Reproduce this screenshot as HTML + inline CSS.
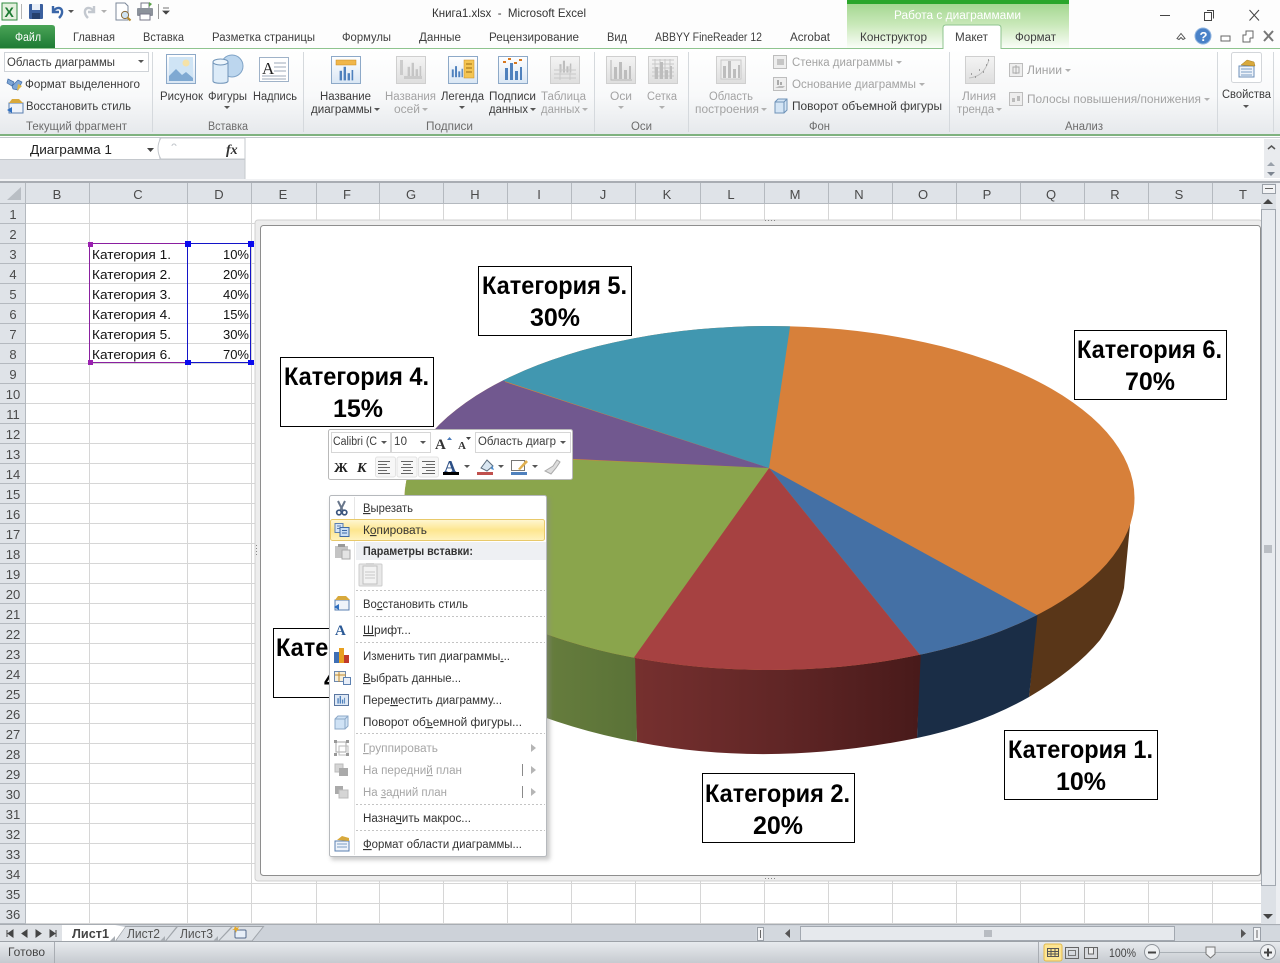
<!DOCTYPE html>
<html lang="ru"><head><meta charset="utf-8"><title>Книга1.xlsx - Microsoft Excel</title>
<style>
html,body{margin:0;padding:0;background:#fff;overflow:hidden}
svg{display:block}
text{font-family:"Liberation Sans",sans-serif;font-size:11.5px;fill:#3c3c3c}
.d{fill:#a3a3a3}
.g{fill:#6c6c6c}
.t{font-size:11.5px;fill:#3f3f3f}
.h{font-size:13px;fill:#4a4a4a;text-anchor:middle}
.r{font-size:13px;fill:#4a4a4a;text-anchor:middle}
.c{font-size:13px;fill:#111}
.v{font-size:13px;fill:#111;text-anchor:end}
.l{font-size:25px;font-weight:bold;fill:#000}
.p{font-size:25px;font-weight:bold;fill:#000;text-anchor:middle}
.m{font-size:11.5px;fill:#333}
.md{font-size:11.5px;fill:#a6a6a6}
.u{text-decoration:underline}
</style></head><body>
<svg xmlns="http://www.w3.org/2000/svg" width="1280" height="963" viewBox="0 0 1280 963">
<defs>
<linearGradient id="rib" x1="0" y1="0" x2="0" y2="1"><stop offset="0" stop-color="#fff"/><stop offset=".55" stop-color="#f8f9fa"/><stop offset="1" stop-color="#e6e9ec"/></linearGradient>
<linearGradient id="file" x1="0" y1="0" x2="0" y2="1"><stop offset="0" stop-color="#4aa457"/><stop offset="1" stop-color="#1e7b34"/></linearGradient>
<linearGradient id="ctx" x1="0" y1="0" x2="0" y2="1"><stop offset="0" stop-color="#9ed48a"/><stop offset=".5" stop-color="#c8e8b8"/><stop offset="1" stop-color="#fafdf8"/></linearGradient>
<linearGradient id="sel" x1="0" y1="0" x2="0" y2="1"><stop offset="0" stop-color="#fff7d4"/><stop offset=".5" stop-color="#fde68f"/><stop offset="1" stop-color="#fff3c0"/></linearGradient>
<linearGradient id="stat" x1="0" y1="0" x2="0" y2="1"><stop offset="0" stop-color="#e9ecef"/><stop offset="1" stop-color="#c6cad0"/></linearGradient>
<linearGradient id="ic" x1="0" y1="0" x2="0" y2="1"><stop offset="0" stop-color="#fff"/><stop offset="1" stop-color="#d9e6f4"/></linearGradient>
<linearGradient id="icd" x1="0" y1="0" x2="0" y2="1"><stop offset="0" stop-color="#f4f4f4"/><stop offset="1" stop-color="#dedede"/></linearGradient>
<linearGradient id="mar" x1="0" y1="0" x2="1" y2="0"><stop offset="0" stop-color="#76302f"/><stop offset=".5" stop-color="#612626"/><stop offset="1" stop-color="#481a1a"/></linearGradient>
<linearGradient id="grn" x1="0" y1="0" x2="1" y2="0"><stop offset="0" stop-color="#6c8240"/><stop offset="1" stop-color="#5a7237"/></linearGradient>
<pattern id="rows" patternUnits="userSpaceOnUse" x="0" y="204" width="10" height="20"><rect y="19" width="10" height="1" fill="#d6d6d6"/></pattern>
<pattern id="rowh" patternUnits="userSpaceOnUse" x="0" y="204" width="10" height="20"><rect y="19" width="10" height="1" fill="#b4b9bf"/></pattern>
<clipPath id="top"><ellipse cx="769.5" cy="498" rx="365" ry="172"/></clipPath>
<filter id="sh" x="-5%" y="-5%" width="112%" height="110%"><feGaussianBlur stdDeviation="2"/></filter>
<g id="bars"><rect x="-8" y="-4" width="3" height="12" fill="#4f81bd"/><rect x="-3" y="-9" width="3" height="17" fill="#4f81bd"/><rect x="2" y="-1" width="3" height="9" fill="#4f81bd"/><rect x="7" y="-5" width="2" height="13" fill="#4f81bd"/></g>
<g id="barsd"><rect x="-8" y="-4" width="3" height="12" fill="#bdbdbd"/><rect x="-3" y="-9" width="3" height="17" fill="#bdbdbd"/><rect x="2" y="-1" width="3" height="9" fill="#bdbdbd"/><rect x="7" y="-5" width="2" height="13" fill="#bdbdbd"/></g>
<path id="ar" d="M-3 0h6l-3 3z" fill="#555"/>
<path id="ard" d="M-3 0h6l-3 3z" fill="#b0b0b0"/>
</defs>

<!-- window background -->
<rect width="1280" height="963" fill="#fff"/>
<rect width="1280" height="48" fill="#fdfdfd"/>

<!-- contextual tab header -->
<rect x="847" y="0" width="222" height="48" fill="url(#ctx)"/>
<rect x="847" y="0" width="222" height="4" fill="#2aa62a"/>
<text x="894" y="19" textLength="127" lengthAdjust="spacingAndGlyphs" style="fill:#fff;font-size:11.5px">Работа с диаграммами</text>

<!-- QAT -->
<rect x="2" y="3" width="15" height="17" fill="#e4f0de" stroke="#2f8a3f"/><text x="4.5" y="17" style="font-size:14px;font-weight:bold;fill:#1e7b34">X</text>
<path d="M21.5 4v15" stroke="#b5b5b5"/>
<rect x="29" y="4" width="14" height="15" rx="1" fill="#3a5f9e"/><rect x="32" y="4" width="8" height="6" fill="#e8eef7"/><rect x="32" y="13" width="8" height="6" fill="#25406e"/>
<path d="M53 6v6h6M53 12c3-6 10-5 9 1-.3 2-1 3-3 5" fill="none" stroke="#3a66a8" stroke-width="2.4"/>
<use href="#ar" x="71" y="10"/>
<path d="M94 6v6h-6M94 12c-3-6-10-5-9 1 .3 2 1 3 3 5" fill="none" stroke="#c3c8cf" stroke-width="2.4"/>
<use href="#ard" x="104" y="10"/>
<path d="M116 3h9l3 3v14h-12z" fill="#fff" stroke="#7b8799"/><circle cx="125" cy="15" r="3.6" fill="#cfe3f3" stroke="#8a6b3c"/><path d="M127.500 17.500l3 3" stroke="#b4892d" stroke-width="2"/>
<rect x="141" y="3" width="8" height="6" fill="#fff" stroke="#778"/><rect x="137" y="8" width="16" height="8" rx="1" fill="#8c929b"/><rect x="140" y="14" width="10" height="6" fill="#fff" stroke="#778"/><path d="M149 2l3 2-3 3" fill="#5aa048"/>
<path d="M158.500 4v15" stroke="#999"/>
<path d="M163 8h6M163 11h6l-3 3z" fill="#444" stroke="#444" stroke-width=".8"/>

<text x="432" y="17" textLength="154" lengthAdjust="spacingAndGlyphs" style="font-size:12px;fill:#333" xml:space="preserve">Книга1.xlsx  -  Microsoft Excel</text>

<!-- window controls -->
<path d="M1160 15.500h10" stroke="#444"/>
<rect x="1204.500" y="12.500" width="7" height="8" fill="#fff" stroke="#444"/><path d="M1207 10.500h6.500v8" fill="none" stroke="#444"/>
<path d="M1249.500 10l9.500 10.500M1259 10l-9.500 10.500" stroke="#444"/>
<path d="M1177 38.500l4-5 4 5-2 1-2-2-2 2z" fill="#fff" stroke="#555"/>
<circle cx="1203" cy="36" r="8" fill="#4a82c8" stroke="#8db2de"/><text x="1199.500" y="41" style="font-size:13px;font-weight:bold;fill:#fff">?</text>
<rect x="1221" y="36" width="9" height="5" fill="#fff" stroke="#666"/>
<rect x="1243" y="35" width="7" height="7" fill="#fff" stroke="#666"/><path d="M1246 35v-4h7v7h-3" fill="#fff" stroke="#666"/>
<path d="M1264 31l9 10M1273 31l-9 10" stroke="#777" stroke-width="2"/>

<!-- tabs -->
<path d="M0 48V28q0-3 3-3h49q3 0 3 3v20z" fill="url(#file)"/>
<text x="15" y="41" textLength="26" lengthAdjust="spacingAndGlyphs" style="fill:#fff;font-size:11.500px">Файл</text>
<g class="tabs">
<text class="t" x="73" y="41" textLength="42" lengthAdjust="spacingAndGlyphs">Главная</text>
<text class="t" x="143" y="41" textLength="41" lengthAdjust="spacingAndGlyphs">Вставка</text>
<text class="t" x="212" y="41" textLength="103" lengthAdjust="spacingAndGlyphs">Разметка страницы</text>
<text class="t" x="342" y="41" textLength="49" lengthAdjust="spacingAndGlyphs">Формулы</text>
<text class="t" x="419" y="41" textLength="42" lengthAdjust="spacingAndGlyphs">Данные</text>
<text class="t" x="489" y="41" textLength="90" lengthAdjust="spacingAndGlyphs">Рецензирование</text>
<text class="t" x="607" y="41" textLength="20" lengthAdjust="spacingAndGlyphs">Вид</text>
<text class="t" x="655" y="41" textLength="107" lengthAdjust="spacingAndGlyphs">ABBYY FineReader 12</text>
<text class="t" x="790" y="41" textLength="40" lengthAdjust="spacingAndGlyphs">Acrobat</text>
<text class="t" x="860" y="41" textLength="67" lengthAdjust="spacingAndGlyphs">Конструктор</text>
<text class="t" x="1015" y="41" textLength="41" lengthAdjust="spacingAndGlyphs">Формат</text>
</g>

<!-- ribbon -->
<rect x="0" y="49" width="1280" height="85" fill="url(#rib)"/>
<path d="M0 48.500H1280" stroke="#8fc48f"/>
<path d="M943 48.500V28q0-3 3-3h52q3 0 3 3v20.500" fill="#fff" stroke="#8fc48f"/>
<rect x="943.500" y="47" width="57" height="4" fill="#fff"/>
<text class="t" x="955" y="41" textLength="33" lengthAdjust="spacingAndGlyphs">Макет</text>
<rect x="0" y="134" width="1280" height="2" fill="#7fb27f"/>
<path d="M152.500 52v80M303.500 52v80M594.500 52v80M688.500 52v80M949.500 52v80M1217.500 52v80M1273.500 52v80" stroke="#d5d9dd"/>

<!-- Текущий фрагмент -->
<rect x="4.500" y="52.500" width="144" height="19" fill="#fff" stroke="#cfd3d8"/>
<text x="7" y="66" textLength="108" lengthAdjust="spacingAndGlyphs">Область диаграммы</text>
<use href="#ar" x="141" y="60"/>
<path d="M8 79l6 3-2 4-5-3zM12 86l6-6 4 2-4 8-5-1z" fill="#7fa7d6" stroke="#3f6aa6" stroke-width=".7"/><path d="M18 84l4 2-5 5z" fill="#e2b84a"/>
<text x="25" y="88" textLength="115" lengthAdjust="spacingAndGlyphs">Формат выделенного</text>
<rect x="9" y="103" width="14" height="10" fill="#eef3fa" stroke="#5a7fb0"/><path d="M12 99h7l4 4H9z" fill="#d8a93c"/><path d="M7 110l5-3v6z" fill="#2f6fc0"/>
<text x="26" y="110" textLength="105" lengthAdjust="spacingAndGlyphs">Восстановить стиль</text>
<text class="g" x="26" y="130" textLength="101" lengthAdjust="spacingAndGlyphs">Текущий фрагмент</text>

<!-- Вставка -->
<rect x="166.500" y="54.500" width="29" height="29" fill="url(#ic)" stroke="#8da9c8"/>
<rect x="169" y="57" width="24" height="24" fill="#cfe4f5"/><circle cx="186" cy="63" r="3.500" fill="#f5e2a8"/><path d="M169 76l7-7 6 6 4-3 7 6v3h-24z" fill="#7fa9d2"/>
<ellipse cx="232" cy="66" rx="11" ry="11" fill="#bcd6ee" stroke="#7fa3c7"/>
<path d="M213 62v19c0 3 15 3 15 0V62z" fill="#dcebf8" stroke="#6f93b8"/><ellipse cx="220.500" cy="62" rx="7.500" ry="3" fill="#eef6fc" stroke="#6f93b8"/>
<rect x="259.500" y="57.500" width="29" height="24" fill="#fff" stroke="#9fb2c8"/>
<text x="262" y="74" style="font-family:'Liberation Serif',serif;font-size:17px;fill:#222">A</text>
<path d="M274 63h12M274 67h12M274 71h12M262 76h24M262 79h24" stroke="#9ca9b8"/>
<text x="160" y="100" textLength="43" lengthAdjust="spacingAndGlyphs">Рисунок</text>
<text x="208" y="100" textLength="39" lengthAdjust="spacingAndGlyphs">Фигуры</text>
<use href="#ar" x="227" y="106"/>
<text x="253" y="100" textLength="44" lengthAdjust="spacingAndGlyphs">Надпись</text>
<text class="g" x="208" y="130" textLength="40" lengthAdjust="spacingAndGlyphs">Вставка</text>

<!-- Подписи -->
<rect x="331.500" y="56.500" width="29" height="27" fill="url(#ic)" stroke="#8da9c8"/>
<rect x="336" y="60" width="20" height="5" fill="#f0b64a" stroke="#c98a1e" stroke-width=".5"/><use href="#bars" transform="translate(346 74) scale(.8)"/>
<rect x="396.500" y="56.500" width="29" height="27" fill="url(#icd)" stroke="#cfcfcf"/><g opacity=".8"><use href="#barsd" transform="translate(414 70) scale(.8)"/><rect x="400" y="60" width="3" height="15" fill="#c5c5c5"/><rect x="404" y="76" width="18" height="3" fill="#c5c5c5"/></g>
<rect x="448.500" y="56.500" width="29" height="27" fill="url(#ic)" stroke="#8da9c8"/>
<use href="#bars" transform="translate(457 72) scale(.65)"/><rect x="464" y="60" width="10" height="18" fill="#f4c552" stroke="#c98a1e" stroke-width=".5"/><path d="M466 64h6M466 68h6M466 72h6" stroke="#9a6b12"/>
<rect x="498.500" y="56.500" width="29" height="27" fill="url(#ic)" stroke="#8da9c8"/><use href="#bars" x="513" y="72"/><path d="M503 62h3M508 59h3M514 63h3M519 60h3" stroke="#d8781e" stroke-width="2"/>
<rect x="550.500" y="56.500" width="29" height="27" fill="url(#icd)" stroke="#cfcfcf"/><use href="#barsd" transform="translate(565 67) scale(.7)"/><path d="M554 70h22M554 74h22M554 78h22M560 66v14M570 66v14" stroke="#c8c8c8"/>
<text x="320" y="100" textLength="51" lengthAdjust="spacingAndGlyphs">Название</text>
<text x="311" y="113" textLength="61" lengthAdjust="spacingAndGlyphs">диаграммы</text><use href="#ar" x="377" y="108"/>
<text class="d" x="385" y="100" textLength="51" lengthAdjust="spacingAndGlyphs">Названия</text>
<text class="d" x="394" y="113" textLength="26" lengthAdjust="spacingAndGlyphs">осей</text><use href="#ard" x="425" y="108"/>
<text x="441" y="100" textLength="43" lengthAdjust="spacingAndGlyphs">Легенда</text><use href="#ar" x="462" y="106"/>
<text x="489" y="100" textLength="47" lengthAdjust="spacingAndGlyphs">Подписи</text>
<text x="489" y="113" textLength="39" lengthAdjust="spacingAndGlyphs">данных</text><use href="#ar" x="533" y="108"/>
<text class="d" x="541" y="100" textLength="45" lengthAdjust="spacingAndGlyphs">Таблица</text>
<text class="d" x="541" y="113" textLength="39" lengthAdjust="spacingAndGlyphs">данных</text><use href="#ard" x="585" y="108"/>
<text class="g" x="426" y="130" textLength="47" lengthAdjust="spacingAndGlyphs">Подписи</text>

<!-- Оси -->
<rect x="606.500" y="56.500" width="29" height="27" fill="url(#icd)" stroke="#cfcfcf"/><use href="#barsd" x="622" y="71"/><path d="M611 60v20h21" fill="none" stroke="#b5b5b5"/>
<rect x="648.500" y="56.500" width="29" height="27" fill="url(#icd)" stroke="#cfcfcf"/><path d="M652 60h22M652 64h22M652 68h22M652 72h22M652 76h22M655 59v20M660 59v20M665 59v20M670 59v20" stroke="#c8c8c8"/><use href="#barsd" x="663" y="71"/>
<text class="d" x="610" y="100" textLength="22" lengthAdjust="spacingAndGlyphs">Оси</text><use href="#ard" x="621" y="106"/>
<text class="d" x="647" y="100" textLength="30" lengthAdjust="spacingAndGlyphs">Сетка</text><use href="#ard" x="662" y="106"/>
<text class="g" x="631" y="130" textLength="21" lengthAdjust="spacingAndGlyphs">Оси</text>

<!-- Фон -->
<rect x="716.500" y="56.500" width="29" height="27" fill="url(#icd)" stroke="#cfcfcf"/><rect x="721" y="60" width="20" height="19" fill="#efefef" stroke="#c8c8c8"/><use href="#barsd" x="731" y="70"/>
<text class="d" x="709" y="100" textLength="44" lengthAdjust="spacingAndGlyphs">Область</text>
<text class="d" x="695" y="113" textLength="64" lengthAdjust="spacingAndGlyphs">построения</text><use href="#ard" x="764" y="108"/>
<rect x="773.500" y="55.500" width="13" height="13" fill="#eee" stroke="#bdbdbd"/><path d="M777 65v-6h7v6z" fill="#c5c5c5"/>
<rect x="773.500" y="77.500" width="13" height="13" fill="#eee" stroke="#bdbdbd"/><path d="M775 88l4-2h6l-2 2z" fill="#bbb"/><path d="M778 85v-5M781 85v-3" stroke="#aaa" stroke-width="2"/>
<path d="M775 102l3-3h9v11l-3 3h-9z" fill="#d4e5f5" stroke="#6f93b8"/><path d="M775 102h9v11M784 102l3-3" fill="none" stroke="#6f93b8"/>
<text class="d" x="792" y="66" textLength="101" lengthAdjust="spacingAndGlyphs">Стенка диаграммы</text><use href="#ard" x="899" y="61"/>
<text class="d" x="792" y="88" textLength="124" lengthAdjust="spacingAndGlyphs">Основание диаграммы</text><use href="#ard" x="922" y="83"/>
<text x="792" y="110" textLength="150" lengthAdjust="spacingAndGlyphs">Поворот объемной фигуры</text>
<text class="g" x="809" y="130" textLength="21" lengthAdjust="spacingAndGlyphs">Фон</text>

<!-- Анализ -->
<rect x="965.500" y="56.500" width="29" height="27" fill="url(#icd)" stroke="#cfcfcf"/><path d="M969 78c10-1 16-6 20-18" fill="none" stroke="#c0c0c0"/><path d="M971 74h1M975 77h1M979 70h1M983 72h1M986 65h1M988 60h1" stroke="#888" stroke-width="1.500"/>
<text class="d" x="962" y="100" textLength="34" lengthAdjust="spacingAndGlyphs">Линия</text>
<text class="d" x="957" y="113" textLength="37" lengthAdjust="spacingAndGlyphs">тренда</text><use href="#ard" x="999" y="108"/>
<rect x="1009.500" y="63.500" width="13" height="13" fill="#eee" stroke="#bdbdbd"/><path d="M1013 73v-6h6v6z" fill="none" stroke="#aaa"/><path d="M1016 65v9" stroke="#aaa"/>
<rect x="1009.500" y="92.500" width="13" height="13" fill="#eee" stroke="#bdbdbd"/><path d="M1012 98h3v4h-3zM1017 96h3v5h-3z" fill="#bbb"/>
<text class="d" x="1027" y="74" textLength="35" lengthAdjust="spacingAndGlyphs">Линии</text><use href="#ard" x="1068" y="69"/>
<text class="d" x="1027" y="103" textLength="174" lengthAdjust="spacingAndGlyphs">Полосы повышения/понижения</text><use href="#ard" x="1207" y="98"/>
<text class="g" x="1065" y="130" textLength="38" lengthAdjust="spacingAndGlyphs">Анализ</text>

<!-- Свойства -->
<rect x="1231.500" y="52.500" width="30" height="30" rx="2" fill="#fff" stroke="#d3d6da"/>
<rect x="1239" y="66" width="15" height="11" fill="#eef3fa" stroke="#6c8fb8"/><path d="M1241 69h11M1241 72h11M1241 75h11" stroke="#7a9cc4"/><path d="M1241 65l6-5 7 2 1 4z" fill="#d8a93c" stroke="#a87c1e" stroke-width=".5"/>
<text x="1222" y="98" textLength="49" lengthAdjust="spacingAndGlyphs">Свойства</text><use href="#ar" x="1246" y="105"/>

<!-- formula bar -->
<rect x="0" y="136" width="1280" height="48" fill="#fff"/>
<rect x="0" y="137" width="245" height="42" fill="#dcdfe4"/>
<rect x="0" y="138" width="159" height="21" fill="#fff"/>
<path d="M0 137.500H1280M0 159.500H245M245 137v42" stroke="#c4c8cd" fill="none"/>
<path d="M161 138c-4 6-4 15 0 21h84v-21z" fill="#fff" stroke="#c4c8cd"/>
<path d="M172 146a2 2 0 1 1 4 0" stroke="#c2c6cb" fill="none"/>
<text x="30" y="154" textLength="82" lengthAdjust="spacingAndGlyphs" style="font-size:13px;fill:#222">Диаграмма 1</text>
<path d="M147 148h7l-3.500 4z" fill="#444"/>
<text x="226" y="154" style="font-family:'Liberation Serif',serif;font-style:italic;font-weight:bold;font-size:14px;fill:#333">fx</text>
<rect x="0" y="179" width="1280" height="2" fill="#f1f2f4"/>
<rect x="0" y="181" width="1280" height="2" fill="#a9adb3"/>
<rect x="1264" y="139" width="16" height="39" fill="#e9ebee"/>
<path d="M1268 149l3.500-3 3.500 3" fill="none" stroke="#555" stroke-width="1.500"/>
<path d="M1267 166l4-4 4 4z" fill="#9aa1aa"/><path d="M1267 172l4 4 4-4z" fill="#7d8590"/>

<!-- grid -->
<rect x="0" y="204" width="1262" height="720" fill="#fff"/>
<rect x="25" y="204" width="1237" height="720" fill="url(#rows)"/>
<path d="M89.500 204V924M187.500 204V924M251.500 204V924M316.500 204V924M379.500 204V924M443.500 204V924M507.500 204V924M571.500 204V924M635.500 204V924M700.500 204V924M764.500 204V924M828.500 204V924M892.500 204V924M956.500 204V924M1020.500 204V924M1084.500 204V924M1148.500 204V924M1212.500 204V924" stroke="#d6d6d6"/>
<rect x="0" y="183" width="1262" height="21" fill="#dfe3e8"/>
<rect x="0" y="204" width="25" height="720" fill="#dfe3e8"/>
<rect x="0" y="204" width="25" height="720" fill="url(#rowh)"/>
<path d="M0 203.500H1262M25.500 183V924M89.500 183V204M187.500 183V204M251.500 183V204M316.500 183V204M379.500 183V204M443.500 183V204M507.500 183V204M571.500 183V204M635.500 183V204M700.500 183V204M764.500 183V204M828.500 183V204M892.500 183V204M956.500 183V204M1020.500 183V204M1084.500 183V204M1148.500 183V204M1212.500 183V204" stroke="#b4b9bf"/>
<path d="M7 200l14-13v13z" fill="#b9bec4"/>
<text class="h" x="57" y="199">B</text><text class="h" x="138" y="199">C</text><text class="h" x="219" y="199">D</text><text class="h" x="283" y="199">E</text><text class="h" x="347" y="199">F</text><text class="h" x="411" y="199">G</text><text class="h" x="475" y="199">H</text><text class="h" x="539" y="199">I</text><text class="h" x="603" y="199">J</text><text class="h" x="667" y="199">K</text><text class="h" x="731" y="199">L</text><text class="h" x="795" y="199">M</text><text class="h" x="859" y="199">N</text><text class="h" x="923" y="199">O</text><text class="h" x="987" y="199">P</text><text class="h" x="1051" y="199">Q</text><text class="h" x="1115" y="199">R</text><text class="h" x="1179" y="199">S</text><text class="h" x="1243" y="199">T</text>
<text class="r" x="13" y="219">1</text><text class="r" x="13" y="239">2</text><text class="r" x="13" y="259">3</text><text class="r" x="13" y="279">4</text><text class="r" x="13" y="299">5</text><text class="r" x="13" y="319">6</text><text class="r" x="13" y="339">7</text><text class="r" x="13" y="359">8</text><text class="r" x="13" y="379">9</text><text class="r" x="13" y="399">10</text><text class="r" x="13" y="419">11</text><text class="r" x="13" y="439">12</text><text class="r" x="13" y="459">13</text><text class="r" x="13" y="479">14</text><text class="r" x="13" y="499">15</text><text class="r" x="13" y="519">16</text><text class="r" x="13" y="539">17</text><text class="r" x="13" y="559">18</text><text class="r" x="13" y="579">19</text><text class="r" x="13" y="599">20</text><text class="r" x="13" y="619">21</text><text class="r" x="13" y="639">22</text><text class="r" x="13" y="659">23</text><text class="r" x="13" y="679">24</text><text class="r" x="13" y="699">25</text><text class="r" x="13" y="719">26</text><text class="r" x="13" y="739">27</text><text class="r" x="13" y="759">28</text><text class="r" x="13" y="779">29</text><text class="r" x="13" y="799">30</text><text class="r" x="13" y="819">31</text><text class="r" x="13" y="839">32</text><text class="r" x="13" y="859">33</text><text class="r" x="13" y="879">34</text><text class="r" x="13" y="899">35</text><text class="r" x="13" y="919">36</text>

<!-- data -->
<text class="c" x="92" y="259" textLength="79" lengthAdjust="spacingAndGlyphs">Категория 1.</text><text class="v" x="249" y="259">10%</text>
<text class="c" x="92" y="279" textLength="79" lengthAdjust="spacingAndGlyphs">Категория 2.</text><text class="v" x="249" y="279">20%</text>
<text class="c" x="92" y="299" textLength="79" lengthAdjust="spacingAndGlyphs">Категория 3.</text><text class="v" x="249" y="299">40%</text>
<text class="c" x="92" y="319" textLength="79" lengthAdjust="spacingAndGlyphs">Категория 4.</text><text class="v" x="249" y="319">15%</text>
<text class="c" x="92" y="339" textLength="79" lengthAdjust="spacingAndGlyphs">Категория 5.</text><text class="v" x="249" y="339">30%</text>
<text class="c" x="92" y="359" textLength="79" lengthAdjust="spacingAndGlyphs">Категория 6.</text><text class="v" x="249" y="359">70%</text>
<rect x="89.500" y="243.500" width="98" height="119" fill="none" stroke="#8a1fa0"/>
<rect x="187.500" y="243.500" width="63" height="119" fill="none" stroke="#1414c8"/>
<path d="M88 242h5v5h-5zM88 360h5v5h-5z" fill="#9a1fb0"/>
<path d="M185 241h6v6h-6zM185 360h6v5h-6zM248 241h6v6h-6zM248 360h6v5h-6z" fill="#0a0aee"/>

<!-- chart frame -->
<rect x="255" y="220" width="1007" height="661" rx="3" fill="#ededed" stroke="#d0d0d0"/>
<rect x="260.500" y="225.500" width="1000" height="650" rx="3" fill="#fff" stroke="#8e8e8e"/>
<path d="M765 220.500h1M768 220.500h1M771 220.500h1M774 220.500h1M765 878.500h1M768 878.500h1M771 878.500h1M774 878.500h1" stroke="#888"/>
<path d="M256.500 545v1M256.500 548v1M256.500 551v1M256.500 554v1" stroke="#888"/>

<!-- pie side -->
<path d="M1134 498L1130 525L1124 588Q1119 612 1100 640Q1075 670 1029 697L1037 610L1100 500Z" fill="#593618"/>
<path d="M1038 610L920 650L917 738Q980 725 1029 697Z" fill="#1a2d46"/>
<path d="M921 650L634 654L637 742Q770 768 917 738Z" fill="url(#mar)"/>
<path d="M635 654L500 610V700Q570 730 637 742Z" fill="url(#grn)"/>
<!-- pie top -->
<g clip-path="url(#top)">
<rect x="400" y="320" width="740" height="360" fill="#d7803a"/>
<path d="M769 468L1100 649.500V720H937V676Z" fill="#4470a5"/>
<path d="M769 468L937 676H620Z" fill="#a64141"/>
<path d="M769 468L625 670H380V451Z" fill="#8aa54c"/>
<path d="M769 468L380 450V320H505V382Z" fill="#71588f"/>
<path d="M769 468L495 378L420 320H791Z" fill="#4197b0"/>
</g>

<!-- labels -->
<rect x="478.500" y="266.500" width="153" height="69" fill="#fff" stroke="#000"/>
<text class="l" x="482" y="294" textLength="145" lengthAdjust="spacingAndGlyphs">Категория 5.</text><text class="p" x="555" y="326">30%</text>
<rect x="1074.500" y="330.500" width="152" height="69" fill="#fff" stroke="#000"/>
<text class="l" x="1077" y="358" textLength="145" lengthAdjust="spacingAndGlyphs">Категория 6.</text><text class="p" x="1150" y="390">70%</text>
<rect x="280.500" y="357.500" width="153" height="69" fill="#fff" stroke="#000"/>
<text class="l" x="284" y="385" textLength="145" lengthAdjust="spacingAndGlyphs">Категория 4.</text><text class="p" x="358" y="417">15%</text>
<rect x="1004.500" y="730.500" width="153" height="69" fill="#fff" stroke="#000"/>
<text class="l" x="1008" y="758" textLength="145" lengthAdjust="spacingAndGlyphs">Категория 1.</text><text class="p" x="1081" y="790">10%</text>
<rect x="702.500" y="773.500" width="152" height="69" fill="#fff" stroke="#000"/>
<text class="l" x="705" y="802" textLength="145" lengthAdjust="spacingAndGlyphs">Категория 2.</text><text class="p" x="778" y="834">20%</text>
<rect x="273.500" y="628.500" width="153" height="69" fill="#fff" stroke="#000"/>
<text class="l" x="276" y="656" textLength="145" lengthAdjust="spacingAndGlyphs">Категория 3.</text><text class="p" x="349" y="688">40%</text>

<!-- mini toolbar -->
<rect x="328.500" y="429.500" width="244" height="50" rx="2" fill="#fff" stroke="#b9b9b9"/>
<rect x="331.500" y="432.500" width="59" height="20" fill="#fff" stroke="#d6d6d6"/>
<rect x="391.500" y="432.500" width="39" height="20" fill="#fff" stroke="#d6d6d6"/>
<rect x="475.500" y="432.500" width="95" height="20" fill="#fff" stroke="#d6d6d6"/>
<text x="333" y="445" textLength="44" lengthAdjust="spacingAndGlyphs">Calibri (С</text><use href="#ar" x="384" y="441"/>
<text x="394" y="445" textLength="13">10</text><use href="#ar" x="423" y="441"/>
<text x="435" y="449" style="font-family:'Liberation Serif',serif;font-size:15px;font-weight:bold;fill:#333">A</text><path d="M447 440l2.500-3 2.500 3z" fill="#4a7ab8"/>
<text x="458" y="449" style="font-family:'Liberation Serif',serif;font-size:11px;font-weight:bold;fill:#333">A</text><path d="M466 437h5l-2.500 3z" fill="#444"/>
<text x="478" y="445" textLength="78" lengthAdjust="spacingAndGlyphs">Область диагр</text><use href="#ar" x="563" y="441"/>
<text x="334" y="472" style="font-family:'Liberation Serif',serif;font-weight:bold;font-size:14px;fill:#222">Ж</text>
<text x="357" y="472" style="font-family:'Liberation Serif',serif;font-weight:bold;font-style:italic;font-size:14px;fill:#222">К</text>
<rect x="375.500" y="457" width="20" height="20" rx="2" fill="#f7f7f7" stroke="#e3e3e3"/><rect x="397" y="457" width="20" height="20" rx="2" fill="#f7f7f7" stroke="#e3e3e3"/><rect x="418.500" y="457" width="20" height="20" rx="2" fill="#f7f7f7" stroke="#e3e3e3"/>
<path d="M378 461.500h12M378 464.500h9M378 467.500h12M378 470.500h9M378 473.500h12M401 461.500h12M403 464.500h8M401 467.500h12M403 470.500h8M401 473.500h12M422 461.500h13M426 464.500h9M422 467.500h13M426 470.500h9M422 473.500h13" stroke="#666"/>
<text x="444" y="472" style="font-family:'Liberation Serif',serif;font-size:17px;font-weight:bold;fill:#2c4f86">A</text><rect x="443" y="472" width="16" height="3" fill="#000"/><use href="#ar" x="467" y="465"/>
<path d="M481 468l6-8 6 6-6 5z" fill="#d9e6f1" stroke="#5c6c7c"/><path d="M492 465l2 5-3-1z" fill="#4a8ccf"/><rect x="477" y="472" width="16" height="3" fill="#c0504d"/><use href="#ar" x="501" y="465"/>
<rect x="511.500" y="460.500" width="13" height="10" fill="#fff" stroke="#777"/><path d="M518 469l8-9 2 2-8 8z" fill="#e0b050"/><rect x="511" y="472" width="16" height="3" fill="#4f81bd"/><use href="#ar" x="535" y="465"/>
<path d="M545 471l8-5 4-6 3 2-4 6-5 6z" fill="#ddd" stroke="#aaa"/>

<!-- context menu -->
<rect x="331" y="498" width="219" height="362" rx="2" fill="#888" opacity=".45" filter="url(#sh)"/>
<rect x="329.500" y="495.500" width="217" height="361" rx="2" fill="#fff" stroke="#b6b9bd"/>
<path d="M354.500 497V855" stroke="#e6e6e6"/>
<rect x="356" y="542" width="190" height="18" fill="#eef0f3"/>
<rect x="330.500" y="519.500" width="214" height="21" rx="2" fill="url(#sel)" stroke="#e8c96a"/>
<path d="M356 590.500H545M356 616.500H545M356 642.500H545M356 733.500H545M356 804.500H545M356 830.500H545" stroke="#c4c4c4" stroke-dasharray="2 2"/>

<path d="M338 501l5 10M345 501l-5 10" fill="none" stroke="#67758a" stroke-width="2"/><circle cx="339" cy="512.500" r="2.300" fill="none" stroke="#3a557e" stroke-width="1.700"/><circle cx="344.500" cy="512.500" r="2.300" fill="none" stroke="#3a557e" stroke-width="1.700"/>
<rect x="335" y="523.500" width="8" height="9" fill="#d8e6f6" stroke="#5c80b0"/><path d="M337 526h4M337 528.500h4" stroke="#5c80b0"/><rect x="340" y="527.500" width="9" height="9" fill="#c9def5" stroke="#3f6aa6"/><path d="M342 530.500h5M342 533h5" stroke="#3f6aa6"/>
<rect x="335" y="546" width="13" height="12" fill="#c4c4c4"/><rect x="338" y="544" width="7" height="3" fill="#999"/><rect x="342" y="550" width="8" height="9" fill="#e4e4e4" stroke="#aaa"/>
<rect x="359" y="564" width="23" height="22" rx="1" fill="#e8e8e8" stroke="#cdcdcd"/><rect x="363" y="566" width="14" height="18" fill="#f2f2f2" stroke="#c0c0c0"/><rect x="366" y="563" width="8" height="4" fill="#d5d5d5"/><path d="M365 572h10M365 575h10M365 578h10" stroke="#c8c8c8"/>
<rect x="335" y="600" width="14" height="10" fill="#eef3fa" stroke="#5a7fb0"/><path d="M338 596h8l4 4H335z" fill="#d8a93c"/><path d="M334 607l5-3v6z" fill="#2f6fc0"/>
<text x="335" y="635" style="font-family:'Liberation Serif',serif;font-size:15px;font-weight:bold;fill:#2c5a96">A</text>
<rect x="334" y="652" width="5" height="11" fill="#3f6fb5"/><rect x="339" y="648" width="5" height="15" fill="#e8a020"/><rect x="344" y="655" width="5" height="8" fill="#c0392b"/>
<rect x="334.500" y="671.500" width="11" height="10" fill="#f6eed8" stroke="#6d88ad"/><path d="M335 675h11M339 672v10" stroke="#c08a30"/><rect x="343.500" y="677.500" width="7" height="7" fill="#e8eef8" stroke="#5c80b0"/>
<rect x="334.500" y="694.500" width="14" height="11" fill="#dfe9f5" stroke="#5a76a0"/><use href="#bars" transform="translate(341 700) scale(.45)"/>
<path d="M335 719l3-3h10v10l-3 3h-10z" fill="#cfe2f5" stroke="#8da9c8"/><path d="M335 719h10v10M345 719l3-3" fill="none" stroke="#8da9c8"/>
<path d="M336 742h10v10h-10z" fill="none" stroke="#aaa"/><rect x="339" y="746" width="9" height="9" fill="none" stroke="#bbb"/><path d="M334 740h3v3h-3zM346 740h3v3h-3zM334 753h3v3h-3zM346 753h3v3h-3z" fill="#999"/>
<rect x="335" y="764" width="8" height="8" fill="#d5d5d5" stroke="#bbb"/><rect x="339" y="768" width="9" height="8" fill="#aaa"/>
<rect x="335" y="786" width="8" height="8" fill="#aaa"/><rect x="339" y="790" width="9" height="8" fill="#d5d5d5" stroke="#bbb"/>
<rect x="335" y="841" width="14" height="10" fill="#eef3fa" stroke="#5a7fb0"/><path d="M337 840l5-4 7 2v3z" fill="#d8a93c"/><path d="M337 844h10M337 847h10" stroke="#7a9cc4"/>

<text class="m" x="363" y="512" textLength="50" lengthAdjust="spacingAndGlyphs"><tspan class="u">В</tspan>ырезать</text>
<text class="m" x="363" y="534" textLength="64" lengthAdjust="spacingAndGlyphs">К<tspan class="u">о</tspan>пировать</text>
<text class="m" x="363" y="555" textLength="110" lengthAdjust="spacingAndGlyphs" style="font-weight:bold">Параметры вставки:</text>
<text class="m" x="363" y="608" textLength="105" lengthAdjust="spacingAndGlyphs">Во<tspan class="u">с</tspan>становить стиль</text>
<text class="m" x="363" y="634" textLength="48" lengthAdjust="spacingAndGlyphs"><tspan class="u">Ш</tspan>рифт...</text>
<text class="m" x="363" y="660" textLength="147" lengthAdjust="spacingAndGlyphs">Изменить тип диаграммы<tspan class="u">.</tspan>..</text>
<text class="m" x="363" y="682" textLength="98" lengthAdjust="spacingAndGlyphs"><tspan class="u">В</tspan>ыбрать данные...</text>
<text class="m" x="363" y="704" textLength="139" lengthAdjust="spacingAndGlyphs">Пере<tspan class="u">м</tspan>естить диаграмму...</text>
<text class="m" x="363" y="726" textLength="159" lengthAdjust="spacingAndGlyphs">Поворот об<tspan class="u">ъ</tspan>емной фигуры...</text>
<text class="md" x="363" y="752" textLength="75" lengthAdjust="spacingAndGlyphs"><tspan class="u">Г</tspan>руппировать</text>
<path d="M531 744l5 4-5 4z" fill="#b5b5b5"/>
<text class="md" x="363" y="774" textLength="99" lengthAdjust="spacingAndGlyphs">На передни<tspan class="u">й</tspan> план</text>
<path d="M522.500 764v12M522.500 786v12" stroke="#8a8a8a"/><path d="M531 766l5 4-5 4zM531 788l5 4-5 4z" fill="#b5b5b5"/>
<text class="md" x="363" y="796" textLength="84" lengthAdjust="spacingAndGlyphs">На <tspan class="u">з</tspan>адний план</text>
<text class="m" x="363" y="822" textLength="108" lengthAdjust="spacingAndGlyphs">Назна<tspan class="u">ч</tspan>ить макрос...</text>
<text class="m" x="363" y="848" textLength="159" lengthAdjust="spacingAndGlyphs"><tspan class="u">Ф</tspan>ормат области диаграммы...</text>

<!-- vertical scrollbar -->
<rect x="1261" y="183" width="19" height="742" fill="#eceef1"/>
<rect x="1261" y="183" width="15" height="742" fill="#dde1e6"/>
<rect x="1262.500" y="184.500" width="13" height="9" fill="#f2f3f5" stroke="#9aa0a8"/><path d="M1265 188.500h8" stroke="#666"/>
<path d="M1263 204l5-5 5 5z" fill="#444"/>
<rect x="1261.500" y="209.500" width="14" height="676" fill="#e8ebef" stroke="#a2a8b0"/>
<path d="M1264 546h8M1264 548h8M1264 550h8M1264 552h8" stroke="#8b9098"/>
<path d="M1263 914h10l-5 5z" fill="#444"/>

<!-- sheet tabs -->
<rect x="0" y="924" width="1280" height="17" fill="#cdd2d9"/>
<path d="M0 924.500H1280" stroke="#a8adb3"/>
<rect x="0" y="925" width="62" height="16" fill="#dfe2e6"/>
<path d="M62.500 925v16" stroke="#999"/>
<path d="M7 930v7M13 930l-5 3.500 5 3.500zM27 930l-5 3.500 5 3.500zM36 930l5 3.500-5 3.500zM50 930l5 3.500-5 3.500zM56 930v7" fill="#444" stroke="#444"/>
<path d="M115.500 941L125.500 926.500H177L165.500 941zM165.500 941L177.500 926.500H232L218.500 941zM218.500 941L232.500 926.500H263.500L252 941z" fill="#dce0e5" stroke="#a0a5ab"/>
<path d="M62 925H115L125 927L115 941H62z" fill="#fff"/>
<path d="M110 941l5-5v5zM160 941l5-5v5zM213 941l5-5v5z" fill="#a8adb3"/>
<text x="72" y="938" textLength="37" lengthAdjust="spacingAndGlyphs" style="font-size:12.500px;font-weight:bold;fill:#444">Лист1</text>
<text x="127" y="938" textLength="33" lengthAdjust="spacingAndGlyphs" style="font-size:12.500px;fill:#555">Лист2</text>
<text x="180" y="938" textLength="33" lengthAdjust="spacingAndGlyphs" style="font-size:12.500px;fill:#555">Лист3</text>
<rect x="235" y="930" width="11" height="8" rx="1" fill="#e8eff8" stroke="#53698a"/><path d="M235 926l2 2 2-2-1 3 2 1-3 0-1 3-1-3-3 0 2-1z" fill="#e4a92c"/>
<!-- horizontal scrollbar -->
<rect x="756" y="926" width="524" height="15" fill="#d3d8de"/>
<rect x="757.500" y="927.500" width="6" height="13" fill="#f2f3f5" stroke="#9aa0a8"/><path d="M760.500 930v8" stroke="#666"/>
<path d="M790 929l-5 4.500 5 4.500z" fill="#555"/>
<rect x="800.500" y="926.500" width="374" height="14" fill="#e6e9ed" stroke="#a2a8b0"/>
<path d="M985 930v7M987 930v7M989 930v7M991 930v7" stroke="#8b9098"/>
<path d="M1241 929l5 4.500-5 4.500z" fill="#555"/>
<rect x="1253.500" y="927.500" width="7" height="13" fill="#f2f3f5" stroke="#9aa0a8"/><path d="M1257 930v8" stroke="#666"/>

<!-- status bar -->
<rect x="0" y="941" width="1280" height="22" fill="url(#stat)"/>
<path d="M0 941.500H1280" stroke="#9da2a8"/>
<text x="8" y="956" textLength="37" lengthAdjust="spacingAndGlyphs" style="fill:#444">Готово</text>
<path d="M54.500 942v21M1038.500 942v21" stroke="#a9adb3"/>
<rect x="1044" y="944" width="18" height="17" rx="2" fill="#fde592" stroke="#e2b94d"/>
<path d="M1047.500 948.500h11v8h-11zM1047.500 951.500h11M1047.500 954h11M1051 948.500v8M1055 948.500v8" fill="none" stroke="#555"/>
<rect x="1065.500" y="947.500" width="13" height="11" fill="none" stroke="#666"/><rect x="1068.500" y="950.500" width="7" height="5" fill="none" stroke="#777"/>
<rect x="1084.500" y="947.500" width="13" height="11" fill="#d8dade" stroke="#666"/><path d="M1088.500 948v6h5v-6" fill="#eee" stroke="#666"/>
<text x="1109" y="957" textLength="27" lengthAdjust="spacingAndGlyphs" style="fill:#444">100%</text>
<circle cx="1152" cy="952" r="7.500" fill="#eef0f2" stroke="#8f949a"/><path d="M1148 952.500h8" stroke="#444" stroke-width="2"/>
<path d="M1160 952.500h100" stroke="#aab0b6"/>
<path d="M1206 947h9v7l-4.500 4-4.500-4z" fill="#f2f3f5" stroke="#777"/>
<circle cx="1268" cy="952" r="7.500" fill="#eef0f2" stroke="#8f949a"/><path d="M1264 952.500h8M1268 948.500v8" stroke="#444" stroke-width="2"/>
</svg>
</body></html>
